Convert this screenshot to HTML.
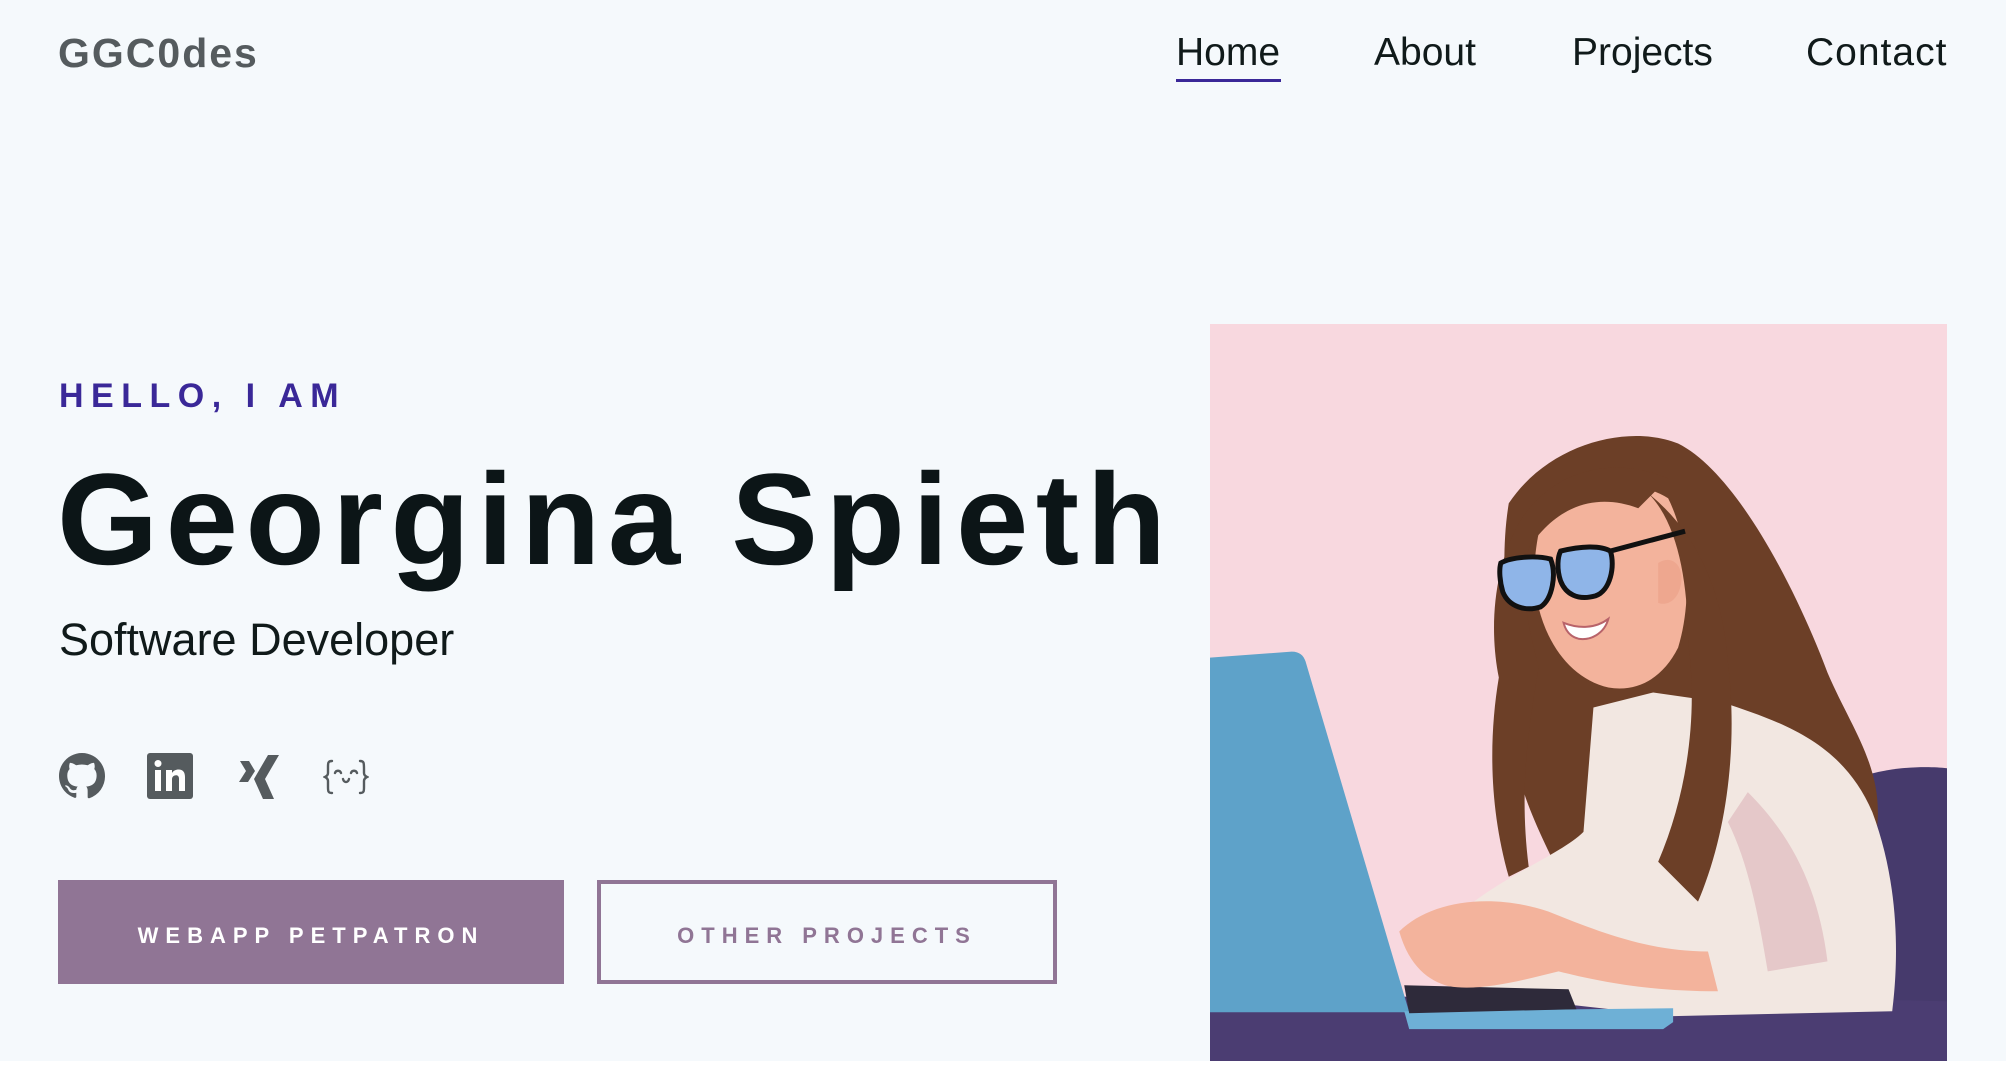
<!DOCTYPE html>
<html><head><meta charset="utf-8"><style>
*{margin:0;padding:0;box-sizing:border-box}
html,body{width:2006px;height:1092px;overflow:hidden;background:#fff;font-family:"Liberation Sans",sans-serif}
.bg{position:absolute;left:0;top:0;width:2006px;height:1061px;background:#f5f9fc}
.t{position:absolute;white-space:nowrap}
.logo{left:58px;top:28px;font-size:41px;font-weight:bold;color:#555b5e;line-height:50px;letter-spacing:2px}
.nav{top:30px;font-size:39px;color:#101a1a;line-height:46px}
.ul{position:absolute;left:1176px;top:79px;width:105px;height:3px;background:#3a2898}
.hello{left:59px;top:376px;font-size:34px;font-weight:bold;color:#3a2898;letter-spacing:7.5px;line-height:40px}
.name{left:57px;top:439px;font-size:130px;font-weight:bold;color:#0c1517;letter-spacing:7.5px;line-height:160px}
.sub{left:59px;top:614px;font-size:45px;color:#101a1a;line-height:52px}
.btn{position:absolute;top:880px;height:104px;display:flex;align-items:center;justify-content:center;font-weight:bold;font-size:22px;letter-spacing:7px;padding-top:8px}
.b1{left:58px;width:506px;background:#907595;color:#fff}
.b2{left:597px;width:460px;border:4px solid #907595;color:#907595}
</style></head><body>
<div class="bg"></div>
<div class="t logo">GGC0des</div>
<div class="t nav" style="left:1176px">Home</div>
<div class="t nav" style="left:1374px">About</div>
<div class="t nav" style="left:1572px">Projects</div>
<div class="t nav" style="left:1806px;letter-spacing:1px">Contact</div>
<div class="ul"></div>
<div class="t hello">HELLO, I AM</div>
<div class="t name">Georgina Spieth</div>
<div class="t sub">Software Developer</div>

<svg style="position:absolute;left:59px;top:753px" width="46" height="46" viewBox="0 0 16 16"><path fill="#555b5e" d="M8 0C3.58 0 0 3.58 0 8c0 3.54 2.29 6.53 5.47 7.590.4.07.55-.17.55-.38v-1.4C3.8 14.3 3.3 12.9 3.3 12.9c-.36-.92-.89-1.170-.89-1.17-.73-.5.05-.49.05-.49.8.06 1.230.83 1.23.83.72 1.23 1.87.87 2.33.67.07-.52.28-.87.5-1.07-1.780-.2-3.640-.89-3.640-3.95 0-.87.31-1.59.82-2.15-.08-.2-.36-1.020.08-2.12 0 0 .67-.21 2.2.82a7.6 7.6 0 0 1 4 0c1.53-1.04 2.2-.82 2.2-.82.44 1.1.16 1.92.08 2.12.51.56.82 1.27.82 2.15 0 3.07-1.87 3.75-3.65 3.95.29.25.54.73.54 1.48v2.2c0 .21.15.46.55.38A8 8 0 0 0 16 8c0-4.42-3.58-8-8-8z"/></svg>
<svg style="position:absolute;left:147px;top:753px" width="46" height="46" viewBox="0 0 46 46"><rect width="46" height="46" rx="3" fill="#555b5e"/><rect x="8" y="17" width="6" height="21" fill="#fff"/><circle cx="11" cy="10.5" r="3.5" fill="#fff"/><path fill="#fff" d="M19 17h6v3c1.5-2.5 4-3.5 6.5-3.5 4.5 0 6.5 2.8 6.5 7.5V38h-6V26c0-2.5-1-3.8-3-3.8s-4 1.4-4 4V38h-6z"/></svg>
<svg style="position:absolute;left:238px;top:755px" width="42" height="44" viewBox="0 0 42 44"><path fill="#555b5e" d="M2 6h9l6 10-7 11H1l7-11z M30 0h11L27 24l9 20H25l-9-20z"/></svg>
<svg style="position:absolute;left:323px;top:759px" width="46" height="36" viewBox="0 0 46 36" fill="none" stroke="#555b5e" stroke-width="2.4" stroke-linecap="round"><path d="M9 2C5 2 5 4 5 8v6c0 2-1 3-3 4 2 1 3 2 3 4v6c0 4 0 6 4 6"/><path d="M37 2c4 0 4 2 4 8v4c0 2 1 3 3 4-2 1-3 2-3 4v6c0 4 0 6-4 6"/><path d="M12 14c1-3 5-3 6 0M28 14c1-3 5-3 6 0M20 20c1 4 5 4 6 0"/></svg>

<div class="btn b1">WEBAPP PETPATRON</div>
<div class="btn b2">OTHER PROJECTS</div>

<svg style="position:absolute;left:1210px;top:324px" width="737" height="737" viewBox="0 0 740 740">
<rect width="740" height="740" fill="#f8d8df"/>
<path d="M662 452c30-8 60-8 78-6v294H650z" fill="#463a6c"/>
<path d="M0 680c150-6 400-8 740 0v60H0z" fill="#4b3d72"/>
<path d="M300 180c40-60 120-80 170-60 60 30 120 150 150 230 30 70 70 110 40 200l-300 20c-40-80-60-120-60-200 0-70-10-130 0-190z" fill="#6c3f27"/>
<path d="M385 385l60-15 70 10c60 20 120 40 150 110 30 80 25 160 20 200l-220 5-180-20c-30-20-50-60-20-95 40-30 90-50 110-70z" fill="#f2e7e1"/>
<path d="M540 470c40 40 70 90 80 170l-60 10c-10-60-20-110-40-150z" fill="#e5c8c9"/>
<path d="M330 210c20-50 90-60 130-35 20 40 25 100 10 150-15 30-40 45-70 40-35-8-60-40-70-80-6-25-5-50 0-75z" fill="#f3b39c"/>
<path d="M450 240c15-10 28 5 22 25-4 14-14 18-22 15z" fill="#eea78f"/>
<path d="M310 200c30-50 90-70 150-45l-30 30c-40-15-80-5-110 40-10 40 0 80 10 120-10 60-20 120-10 200l-20 10c-20-70-20-140-10-200-10-50-5-110 20-155z" fill="#6c3f27"/>
<path d="M440 170c30 30 40 90 40 150 10 70 0 150-30 220l40 40c30-70 40-160 30-240-5-70-30-130-80-170z" fill="#6c3f27"/>
<g fill="#8fb5e8" stroke="#111" stroke-width="5"><path d="M292 240c10-6 35-8 50-4 6 15 2 40-10 48-15 5-32 0-38-15-3-10-4-22-2-29z"/><path d="M352 228c20-5 40-6 50 0 5 15 0 40-15 45-18 5-30-2-35-15-4-12-3-24 0-30z"/></g>
<path d="M402 228l75-20" stroke="#111" stroke-width="5"/>
<path d="M355 300c15 6 32 6 45-4-4 15-18 22-30 20-8-2-13-8-15-16z" fill="#fff" stroke="#b8636a" stroke-width="2"/>
<path d="M0 335l82-6c8 0 12 4 14 10l104 352H0z" fill="#5ea2c9"/>
<path d="M195 690l270-3v14l-10 7H200z" fill="#6eb0d6"/>
<path d="M195 664l165 4 8 20-168 4z" fill="#2e2a3a"/>
<path d="M190 610c30-30 90-40 150-20 50 20 100 40 160 40l10 40c-70 0-120-10-160-20-40 10-80 20-110 15-20-5-40-20-50-55z" fill="#f3b39c"/>
</svg>
</body></html>
